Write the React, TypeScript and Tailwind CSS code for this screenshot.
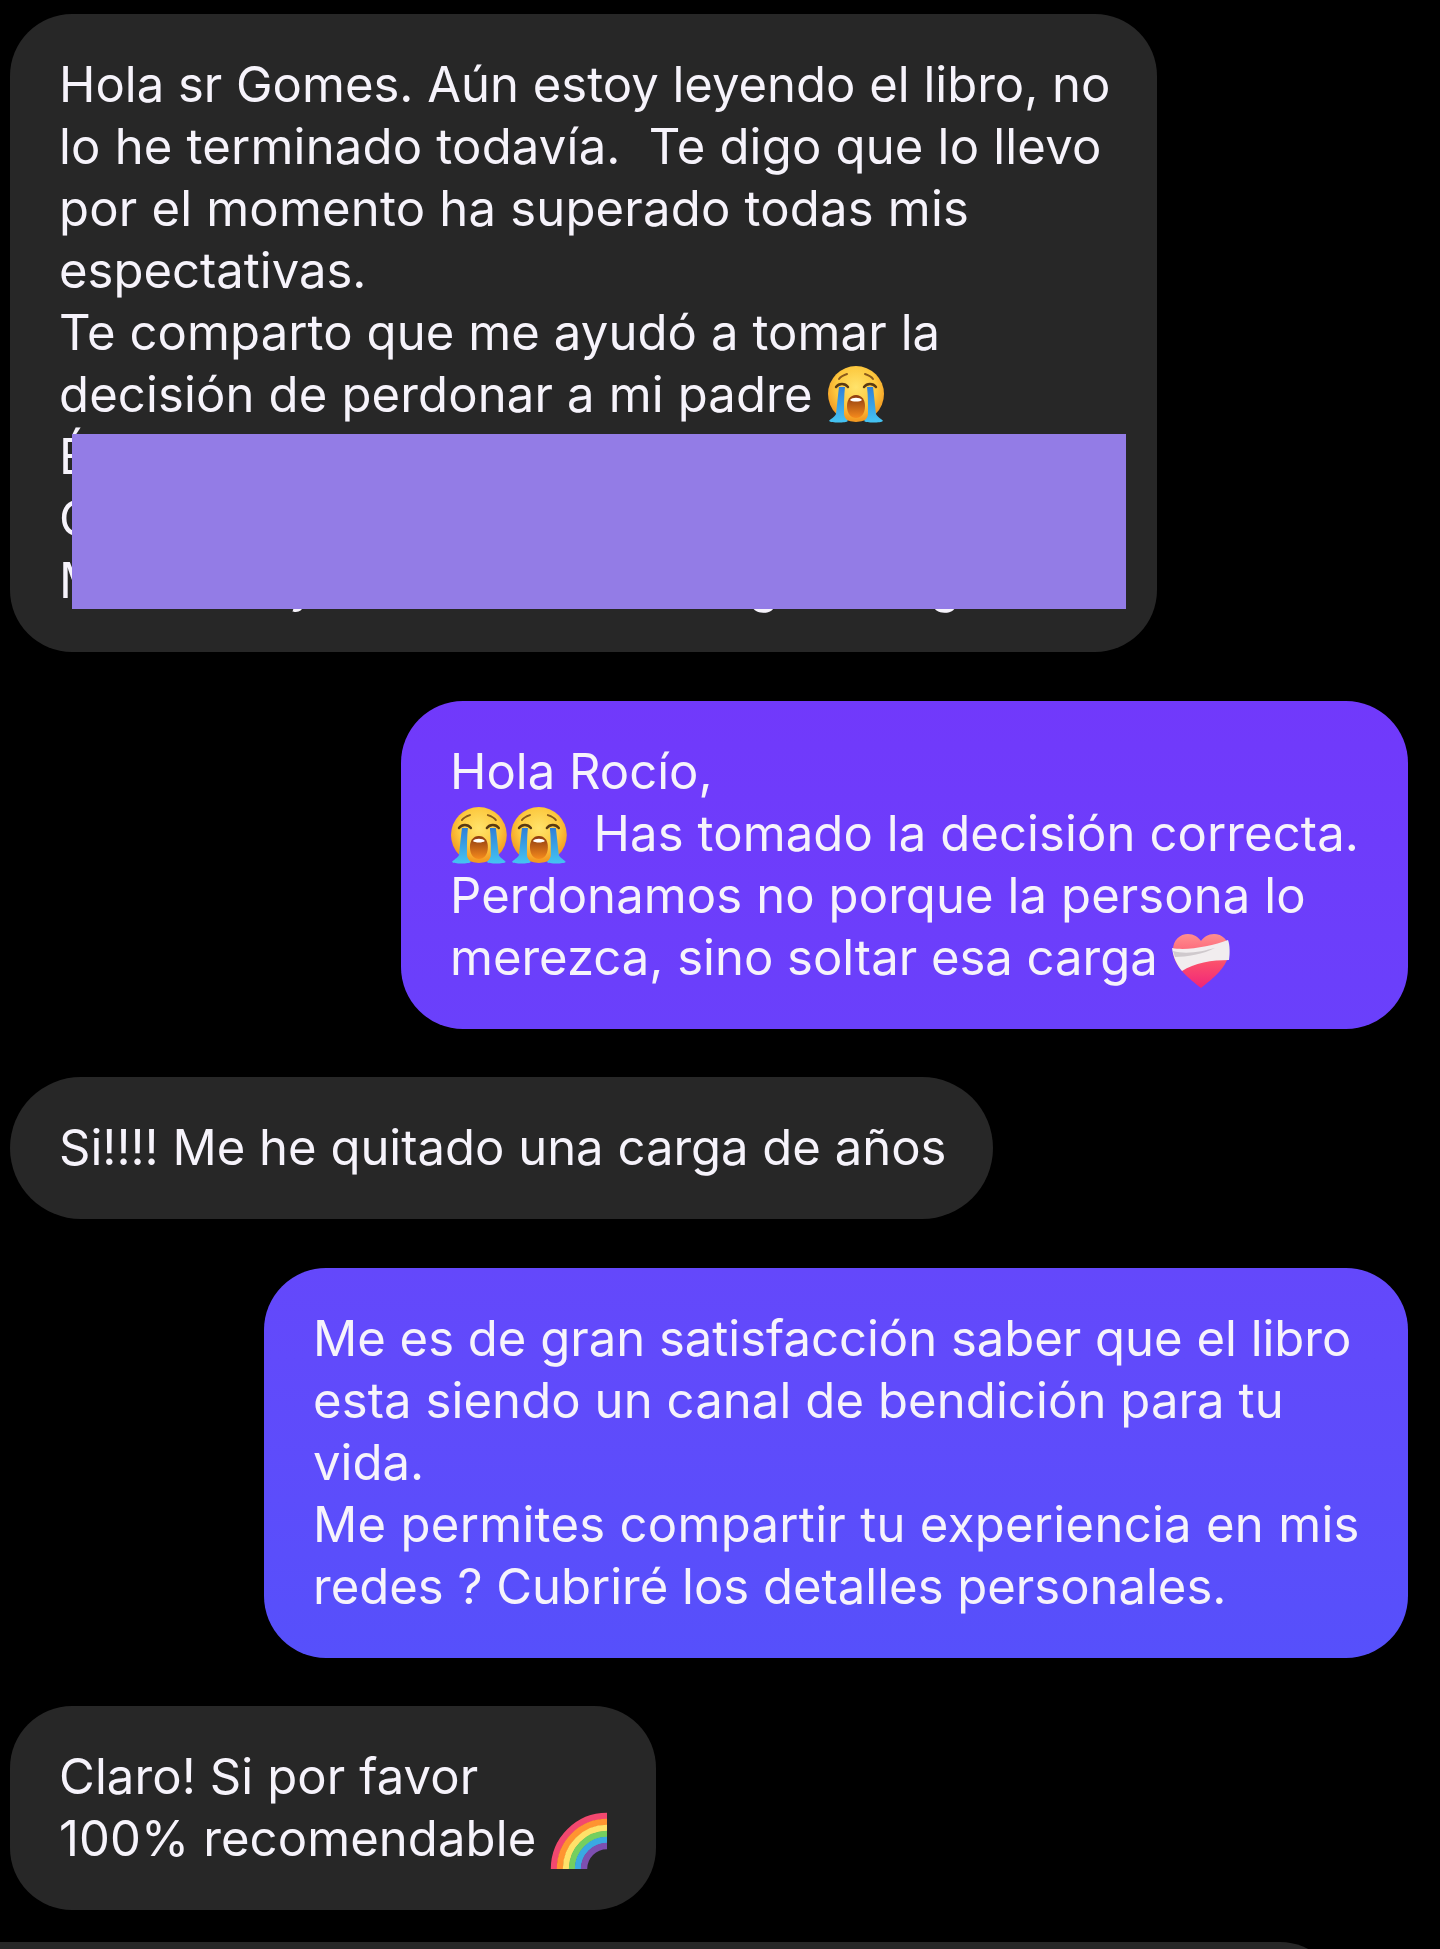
import { useId } from "react";

function CryFace({ className }: { className: string }) {
  const id = useId();
  return (
    <svg viewBox="0 0 58 58" className={className}>
      <defs>
        <radialGradient id={id + "f"} cx="50%" cy="38%" r="58%">
          <stop offset="0%" stopColor="#ffe36b" />
          <stop offset="62%" stopColor="#fdc93f" />
          <stop offset="100%" stopColor="#f39a22" />
        </radialGradient>
        <linearGradient id={id + "t"} x1="0" y1="0" x2="0" y2="1">
          <stop offset="0%" stopColor="#2f7fd8" />
          <stop offset="100%" stopColor="#45c4f2" />
        </linearGradient>
        <linearGradient id={id + "m"} x1="0" y1="0" x2="0" y2="1">
          <stop offset="0%" stopColor="#8c3a10" />
          <stop offset="100%" stopColor="#f58a1c" />
        </linearGradient>
      </defs>
      <circle cx="29" cy="28" r="28" fill={`url(#${id}f)`} />
      <path d="M29 29c-6 0-9 5-9 11 0 8 4 12 9 12s9-4 9-12c0-6-3-11-9-11z" fill={`url(#${id}m)`} />
      <path d="M23 34c2-3 10-3 12 0-2 2-10 2-12 0z" fill="#fff" />
      <path d="M12 21c-1 8-2 18-3 27-1 3-6 5-7 7 2 2 17 2 19 0-2-2-4-4-4-7 0-9 0-19 1-27z" fill={`url(#${id}t)`} />
      <path d="M46 21c1 8 2 18 3 27 1 3 6 5 7 7-2 2-17 2-19 0 2-2 4-4 4-7 0-9 0-19-1-27z" fill={`url(#${id}t)`} />
      <path d="M9 21c3-4 9-4 12 0M37 21c3-4 9-4 12 0" fill="none" stroke="#5a3a12" strokeWidth="2.4" strokeLinecap="round" />
      <path d="M12 13c2-3 5-4 8-5M46 13c-2-3-5-4-8-5" fill="none" stroke="#8a5a1c" strokeWidth="2" strokeLinecap="round" />
    </svg>
  );
}

function BandagedHeart({ className }: { className: string }) {
  const id = useId();
  return (
    <svg viewBox="0 0 58 56" className={className}>
      <defs>
        <linearGradient id={id + "h"} x1="0" y1="0" x2="0" y2="1">
          <stop offset="0%" stopColor="#ff8f8f" />
          <stop offset="55%" stopColor="#fb4d6c" />
          <stop offset="100%" stopColor="#f0257a" />
        </linearGradient>
      </defs>
      <path d="M29 55C18 46 1 34 1 17 1 7 8 1 16 1c6 0 10 3 13 7 3-4 7-7 13-7 8 0 15 6 15 16 0 17-17 29-28 38z" fill={`url(#${id}h)`} />
      <path d="M0 15C15 18 40 13 56 7c2 5 2 14 1 20-17 0-35 3-47 11C5 32 1 24 0 15z" fill="#f1edef" />
      <path d="M1 18c14 4 30 0 42-3C32 21 14 24 3 24z" fill="#cfc9cd" />
    </svg>
  );
}

function Rainbow({ className }: { className: string }) {
  const bands = [
    { r: 53, c: "#f2486f" },
    { r: 47, c: "#ff9430" },
    { r: 41, c: "#ffe169" },
    { r: 35, c: "#74cf5f" },
    { r: 29, c: "#3aa9e2" },
    { r: 23, c: "#7d4fb0" },
  ];
  return (
    <svg viewBox="0 0 58 58" className={className}>
      {bands.map((b) => (
        <path
          key={b.r}
          d={`M${57 - b.r} 57A${b.r} ${b.r} 0 0 1 57 ${57 - b.r}`}
          fill="none"
          stroke={b.c}
          strokeWidth="6.4"
        />
      ))}
    </svg>
  );
}

export default function App() {
  const text = "font-['Inter',sans-serif] text-[49px] leading-[62px] text-[#f6f3fb] whitespace-pre";
  return (
    <div className="h-[1949px] overflow-hidden bg-black pt-[14px] flex flex-col">
      <div className={`relative ml-[10px] w-[1147px] h-[638px] rounded-[62px] bg-[#272727] px-[49px] py-[40px] ${text}`}>
        <div>Hola sr Gomes. Aún estoy leyendo el libro, no</div>
        <div className="tracking-[0.2px]">lo he terminado todavía.  Te digo que lo llevo</div>
        <div className="tracking-[0.2px]">por el momento ha superado todas mis</div>
        <div>espectativas.</div>
        <div className="tracking-[0.1px]">Te comparto que me ayudó a tomar la</div>
        <div className="tracking-[0.15px]">
          decisión de perdonar a mi padre{" "}
          <CryFace className="inline-block align-top mt-[2px] w-[58px] h-[58px]" />
        </div>
        <div>É</div>
        <div>C</div>
        <div>
          M<span className="ml-[186px] align-[-4px]">y</span>
          <span className="ml-[432px] align-[-4px]">g</span>
          <span className="ml-[151px] align-[-4px]">g</span>
        </div>
        <div className="absolute left-[62px] top-[420px] w-[1054px] h-[175px] bg-[#937ce6]" />
      </div>

      <div className={`mt-[49px] ml-[401px] w-[1007px] h-[329px] rounded-[62px] bg-gradient-to-b from-[#7139fb] to-[#6a40fb] px-[49px] py-[40px] ${text}`}>
        <div>Hola Rocío,</div>
        <div className="flex">
          <CryFace className="mt-[4px] w-[58px] h-[58px]" />
          <CryFace className="mt-[4px] ml-[2px] w-[58px] h-[58px]" />
          <span className="ml-[26px] tracking-[0.1px]">Has tomado la decisión correcta.</span>
        </div>
        <div className="tracking-[0.1px]">Perdonamos no porque la persona lo</div>
        <div>
          merezca, sino soltar esa carga{" "}
          <BandagedHeart className="inline-block align-top mt-[6px] w-[58px] h-[56px]" />
        </div>
      </div>

      <div className={`mt-[48px] ml-[10px] w-[983px] h-[142px] rounded-[71px] bg-[#272727] px-[49px] py-[40px] ${text}`}>
        Si!!!! Me he quitado una carga de años
      </div>

      <div className={`mt-[49px] ml-[264px] w-[1144px] h-[391px] rounded-[62px] bg-gradient-to-b from-[#6448fb] to-[#5650fb] px-[49px] py-[40px] ${text}`}>
        <div>Me es de gran satisfacción saber que el libro</div>
        <div className="tracking-[0.1px]">esta siendo un canal de bendición para tu</div>
        <div>vida.</div>
        <div className="tracking-[0.3px]">Me permites compartir tu experiencia en mis</div>
        <div>redes ? Cubriré los detalles personales.</div>
      </div>

      <div className={`mt-[48px] ml-[10px] w-[646px] h-[204px] rounded-[62px] bg-[#272727] px-[49px] py-[40px] ${text}`}>
        <div className="tracking-[0.1px]">Claro! Si por favor</div>
        <div className="tracking-[0.1px]">
          100% recomendable{" "}
          <Rainbow className="inline-block align-top mt-[4px] w-[58px] h-[58px]" />
        </div>
      </div>

      <div className="mt-[32px] w-[1340px] h-[100px] shrink-0 rounded-tr-[60px] bg-[#272727]" />
    </div>
  );
}
